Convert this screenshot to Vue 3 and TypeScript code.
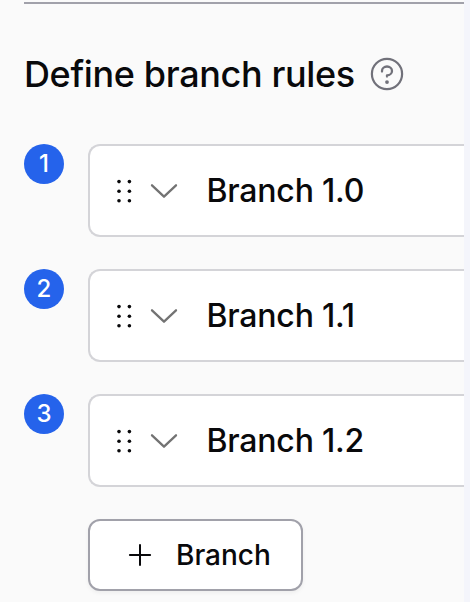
<script lang="ts" setup>
import { reactive } from 'vue';

interface Branch {
  id: number;
  name: string;
}

const branches = reactive<Branch[]>([
  { id: 1, name: 'Branch 1.0' },
  { id: 2, name: 'Branch 1.1' },
  { id: 3, name: 'Branch 1.2' },
]);

function addBranch() {
  const id = branches.length + 1;
  branches.push({ id, name: `Branch 1.${id - 1}` });
}
</script>

<template>
  <div class="panel">
    <div class="divider"></div>
    <header class="heading">
      <h1>Define branch rules</h1>
      <svg class="help" viewBox="0 0 34 34" fill="none">
        <circle cx="17" cy="17" r="15.1" stroke="currentColor" stroke-width="2.2" />
        <path
          d="M17 19.6v-1.3c2.8 0 5-2 5-4.4s-2.2-4.4-5-4.4-5 2-5 4.4v.6"
          stroke="currentColor"
          stroke-width="2.3"
          stroke-linecap="round"
          stroke-linejoin="round"
        />
        <circle cx="17" cy="25.1" r="1.9" fill="currentColor" />
      </svg>
    </header>

    <ol class="branches">
      <li v-for="(branch, index) in branches" :key="branch.id" class="branch">
        <span class="badge">{{ index + 1 }}</span>
        <div class="card">
          <svg class="grip" viewBox="0 0 16 24" fill="currentColor">
            <template v-for="y in [2.6, 12.2, 21.8]" :key="y">
              <circle cx="3" :cy="y" r="1.8" />
              <circle cx="13.4" :cy="y" r="1.8" />
            </template>
          </svg>
          <svg class="chevron" viewBox="0 0 28 16" fill="none">
            <path
              d="M2 2.3l12 11.4 12-11.4"
              stroke="currentColor"
              stroke-width="2.3"
              stroke-linecap="round"
              stroke-linejoin="round"
            />
          </svg>
          <span class="name">{{ branch.name }}</span>
        </div>
      </li>
    </ol>

    <button class="add" type="button" @click="addBranch">
      <svg class="plus" viewBox="0 0 24 24" fill="none">
        <path d="M12 1.9v20.2M1.9 12h20.2" stroke="currentColor" stroke-width="2" stroke-linecap="round" />
      </svg>
      <span>Branch</span>
    </button>
  </div>
</template>

<style>
body {
  margin: 0;
  background: #f4f5fb;
}
</style>

<style scoped>
.panel {
  box-sizing: border-box;
  width: 464px;
  height: 602px;
  padding: 2px 0 0 24px;
  overflow: hidden;
  background: #fafafa;
  color: #09090b;
  font-family: Inter, "Liberation Sans", sans-serif;
  font-weight: 500;
}

.divider {
  height: 2px;
  background: #a1a1aa;
}

.heading {
  display: flex;
  align-items: center;
  height: 56px;
  margin-top: 42px;
}

h1 {
  margin: 0;
  font-size: 36px;
  line-height: 56px;
  font-weight: 500;
  letter-spacing: -0.01em;
  white-space: nowrap;
}

.help {
  width: 34px;
  height: 34px;
  margin-left: 15px;
  color: #71717a;
}

.branches {
  display: flex;
  flex-direction: column;
  gap: 32px;
  margin: 42px 0 32px;
  padding: 0;
  list-style: none;
}

.branch {
  display: flex;
  gap: 24px;
}

.badge {
  display: flex;
  flex: none;
  align-items: center;
  justify-content: center;
  width: 40px;
  height: 40px;
  border-radius: 50%;
  background: #2563eb;
  color: #fff;
  font-size: 24px;
  line-height: 40px;
}

.card {
  box-sizing: border-box;
  display: flex;
  flex: 1;
  align-items: center;
  height: 93px;
  padding-left: 26px;
  border: 2px solid #d4d4d8;
  border-right: 0;
  border-radius: 12px 0 0 12px;
  background: #fff;
}

.grip {
  width: 16px;
  height: 24px;
}

.chevron {
  width: 28px;
  height: 16px;
  margin-left: 18px;
  color: #737373;
}

.name {
  margin-left: 28.5px;
  font-size: 32px;
  line-height: 48px;
  letter-spacing: -0.2px;
  white-space: nowrap;
}

.add {
  box-sizing: border-box;
  display: flex;
  align-items: center;
  width: 215px;
  height: 72px;
  margin-left: 64px;
  padding: 0 0 0 38px;
  border: 2px solid #a1a1aa;
  border-radius: 12px;
  background: #fff;
  box-shadow: 0 2px 4px rgba(0, 0, 0, 0.05);
  color: inherit;
  font: inherit;
  font-size: 28px;
  line-height: 40px;
}

.plus {
  width: 24px;
  height: 24px;
  margin-right: 24px;
}
</style>
